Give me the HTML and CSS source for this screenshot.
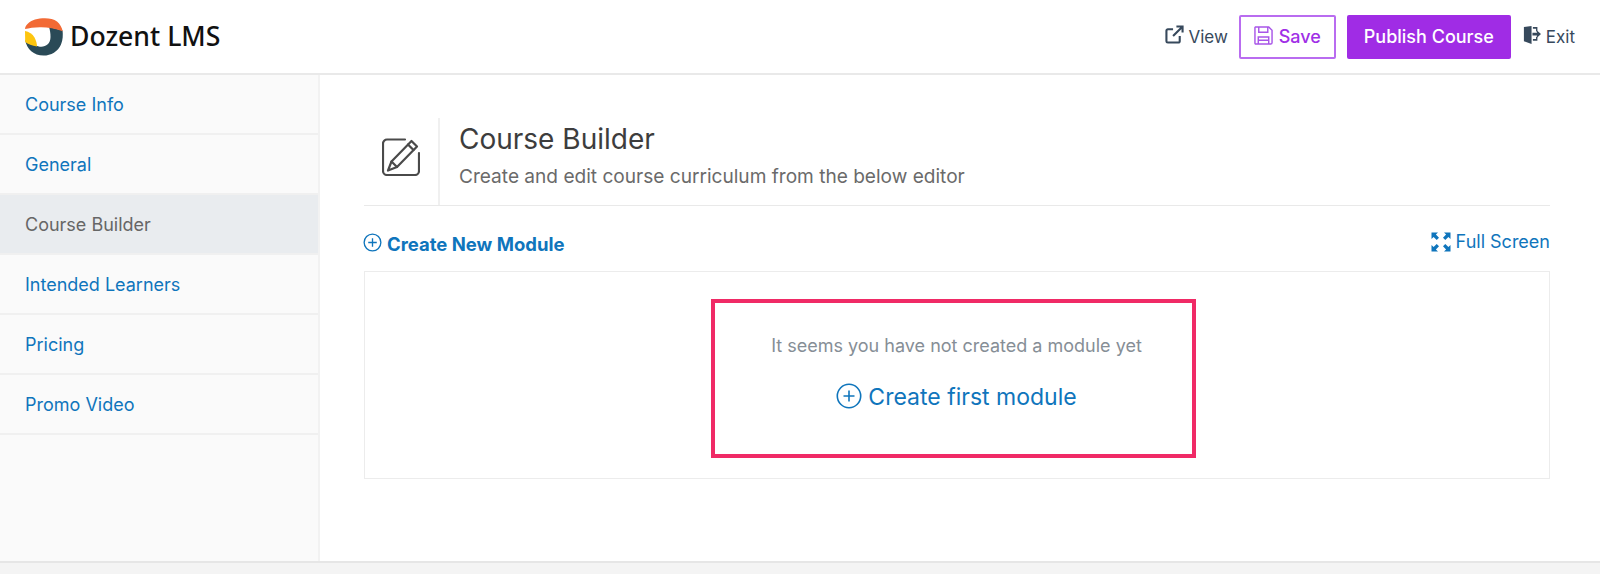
FILE: index.html
```html
<!DOCTYPE html>
<html lang="en">
<head>
<meta charset="utf-8">
<title>Course Builder</title>
<link rel="stylesheet" href="styles.css">
</head>
<body>
<header class="topbar">
  <div class="brand">
    <svg class="logo" viewBox="0 0 38 38">
      <path fill="#2a4a57" d="M24 9 37.600 12.500C38 17 38 22 36 26.500 33 33.500 26 37.600 18.500 37.600 9 37.600 1.500 31 .2 22L10 27C17 31 25.500 28 25.500 19 25.500 15 25 12 24 9Z"/>
      <path fill="#f26a35" d="M0 11C.5 6.500 5 3 10 1.500 17 -.3 27 -.6 32 3.500 35 6 37 9.500 37.700 13.300 30 10.500 22 9 15 9.200 9 9.400 4 10 0 11Z"/>
      <path fill="#fdc50f" d="M0 13C4 13.500 7.500 16 9.500 19.500 11 22.500 12 25.500 12 28.500 7 27.500 3 26 .2 24Z"/>
    </svg>
    <span class="brand-name">Dozent LMS</span>
  </div>
  <nav class="actions">
    <a class="plain"><svg class="ic ic-view" viewBox="0 0 20 20" fill="none" stroke="#37495c" stroke-width="2.200"><path d="M15.500 11.500V17a1.500 1.500 0 0 1-1.500 1.500H3A1.500 1.500 0 0 1 1.500 17V6A1.500 1.500 0 0 1 3 4.500h5.500"/><path d="M12 1.500h6.500V8M18 2l-9.500 9.500"/></svg><span>View</span></a>
    <a class="btn btn-outline"><svg class="ic" viewBox="0 0 20 20" fill="none" stroke="#a855e8" stroke-width="1.500"><path d="M1.500 1h14l3.500 3.500V17.500a1.500 1.500 0 0 1-1.500 1.500h-16A1 1 0 0 1 1 18V1.500Z"/><path d="M5 1v5.500h9.500V1M4.500 19v-7.500h11V19M4.500 15h11"/></svg><span>Save</span></a>
    <a class="btn btn-solid">Publish Course</a>
    <a class="plain plain-exit"><svg class="ic ic-exit" viewBox="0 0 20 20"><path fill="#37495c" d="M1 1 9.500 0v20L1 17ZM11 1h5v5h-1.500V3H11ZM11 14.500h3.500V12H16v4.500h-5Z"/><path fill="#37495c" d="M10.500 7.500h5V5l4.500 4-4.500 4v-2.500h-5Z"/></svg><span>Exit</span></a>
  </nav>
</header>
<div class="layout">
  <aside class="sidebar">
    <a class="side-item">Course Info</a>
    <a class="side-item">General</a>
    <a class="side-item active">Course Builder</a>
    <a class="side-item">Intended Learners</a>
    <a class="side-item">Pricing</a>
    <a class="side-item">Promo Video</a>
  </aside>
  <main class="content">
    <section class="page-head">
      <div class="page-icon">
        <svg viewBox="0 0 38 38" fill="none" stroke="#4a4a4a" stroke-width="2.200" stroke-linejoin="round" stroke-linecap="round"><path d="M23 1.500H5A4 4 0 0 0 1 5.500V33a4 4 0 0 0 4 4h28a4 4 0 0 0 4-4V15"/><path d="M29.500 3 35 8.500 15 29 6 32.500 9.500 23.500Z"/><path d="M26 6.500 31.500 12M9.500 23.500 15 29"/></svg>
      </div>
      <div class="page-text">
        <h1>Course Builder</h1>
        <p>Create and edit course curriculum from the below editor</p>
      </div>
    </section>
    <div class="toolbar">
      <a class="new-module"><svg class="plus small" viewBox="0 0 20 20" fill="none" stroke="#0f75bc" stroke-width="1.400"><circle cx="10" cy="10" r="8.800"/><path d="M10 5.500v9M5.500 10h9"/></svg>Create New Module</a>
      <a class="full"><svg class="ic-full" viewBox="0 0 20 20" fill="#0f75bc"><path d="M.5.500h6.500L4.900 2.600 8 5.700 5.700 8 2.600 4.900 .5 7ZM19.500.500V7L17.400 4.900 14.300 8 12 5.700 15.100 2.600 13 .5ZM.5 19.500V13L2.600 15.100 5.700 12 8 14.300 4.900 17.400 7 19.500ZM19.500 19.500H13L15.100 17.400 12 14.300 14.300 12 17.400 15.100 19.500 13Z"/></svg>Full Screen</a>
    </div>
    <section class="panel">
      <div class="empty">
        <p>It seems you have not created a module yet</p>
        <a class="first"><svg class="plus" viewBox="0 0 26 26" fill="none" stroke="#0f75bc" stroke-width="1.600"><circle cx="13" cy="13" r="11.700"/><path d="M13 7.500v11M7.500 13h11"/></svg>Create first module</a>
      </div>
    </section>
  </main>
</div>
<footer class="foot"></footer>
</body>
</html>
```
FILE: styles.css
```css
* { box-sizing: border-box; }
html, body { margin: 0; height: 574px; overflow: hidden; }
body { font-family: Inter, "Liberation Sans", sans-serif; background: #fff; color: #333; display: flex; flex-direction: column; }
a { text-decoration: none; cursor: pointer; }

.topbar { height: 75px; flex: none; display: flex; align-items: center; justify-content: space-between; padding: 0 25px; background: #fff; border-bottom: 2px solid #e9e9e9; }
.brand { display: flex; align-items: center; gap: 7px; }
.logo { width: 38px; height: 38px; }
.brand-name { font-family: "Noto Sans", sans-serif; font-size: 26.600px; font-weight: 500; line-height: 36px; margin-top: -2px; color: #111; }
.actions { display: flex; align-items: center; }
.plain { display: flex; align-items: center; gap: 4px; font-size: 17px; color: #37495c; }
.plain-exit { gap: 5px; }
.ic { width: 18px; height: 18px; flex: none; margin-top: -4px; }
.ic-view { width: 19px; height: 19px; }
.btn { height: 44px; display: flex; align-items: center; justify-content: center; border-radius: 2px; font-size: 18px; font-weight: 500; }
.btn-outline { width: 97px; margin: 0 11px; gap: 6px; color: #a02fe6; border: 2px solid #b96cf0; }
.btn-outline .ic { width: 19px; height: 19px; margin-top: -2px; }
.btn-solid { width: 164px; margin-right: 12px; background: #a02ce5; color: #fff; }

.layout { flex: 1; display: flex; min-height: 0; }
.sidebar { width: 320px; flex: none; background: #fafafa; border-right: 2px solid #f2f2f2; }
.side-item { height: 60px; display: flex; align-items: center; padding-left: 25px; font-size: 18px; color: #0f75bc; border-bottom: 2px solid #f0f0f0; }
.side-item.active { background: #e9ecef; color: #666; }

.content { flex: 1; padding: 43px 50px 0 44px; }
.page-head { height: 88px; display: flex; border-bottom: 1px solid #e9e9e9; }
.page-icon { width: 76px; flex: none; display: flex; align-items: center; justify-content: center; padding-bottom: 9px; border-right: 2px solid #f0f0f0; }
.page-icon svg { width: 38px; height: 38px; }
.page-text { padding-left: 19px; }
.page-text h1 { margin: 3px 0 0; font-size: 28px; font-weight: 400; line-height: 36px; color: #3d3d3d; }
.page-text p { margin: 6px 0 0; font-size: 19.080px; line-height: 28px; color: #6a6a6a; }

.toolbar { display: flex; justify-content: space-between; align-items: center; height: 65px; padding-top: 10px; }
.new-module { display: flex; align-items: center; gap: 5px; font-size: 18.500px; font-weight: 700; color: #0f75bc; }
.full { display: flex; align-items: center; gap: 5px; font-size: 18px; color: #0f75bc; margin-top: -4px; }
.ic-full { width: 20px; height: 20px; }
.plus { width: 26px; height: 26px; flex: none; margin-top: -3px; }
.plus.small { width: 19px; height: 19px; margin-left: -1px; margin-top: -3px; }

.panel { height: 208px; display: flex; justify-content: center; padding: 27px 7px 0 0; border: 1px solid #ececec; }
.empty { width: 485px; height: 159px; padding-left: 6px; border: 4px solid #f02a66; display: flex; flex-direction: column; align-items: center; }
.empty p { margin: 30px 0 0; font-size: 18px; line-height: 26px; color: #868e96; }
.first { display: flex; align-items: center; gap: 6px; margin-top: 20px; font-size: 23px; line-height: 36px; color: #0f75bc; }

.foot { height: 13px; flex: none; background: #f4f4f4; border-top: 2px solid #e6e6e6; }
```
